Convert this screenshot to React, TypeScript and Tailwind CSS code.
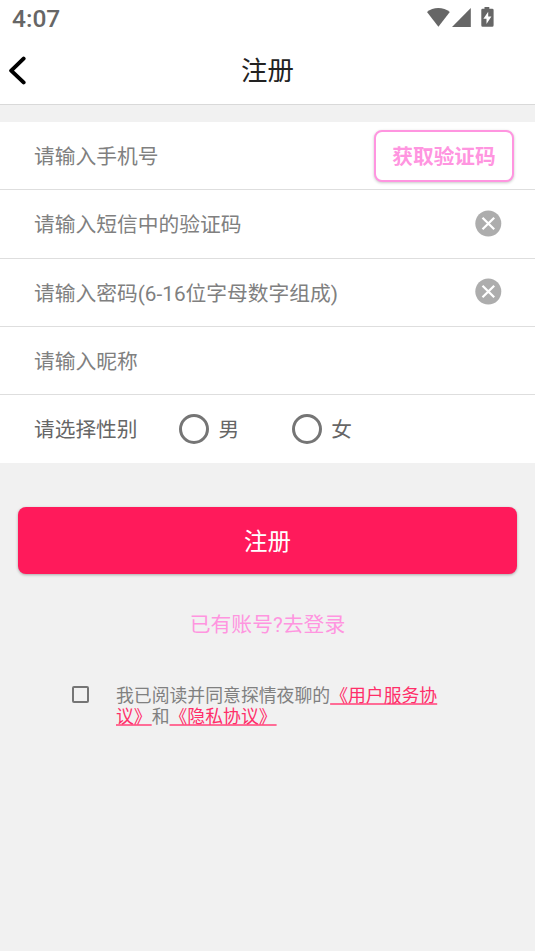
import type { ReactNode } from "react";

function StatusBar() {
  return (
    <div className="flex h-[37px] items-start justify-between bg-white pl-3 pr-10 text-[#666666]">
      <span className="mt-[4px] text-[24.5px] leading-[29px] font-medium">4:07</span>
      <svg className="mt-[6px] h-[22px] w-[70px]" viewBox="0 0 70 22" fill="#666666">
        <path d="M2 6C8 .8 18.5 .8 24.8 6L13.4 20.7Z" />
        <path d="M45.8 2V21H27Z" />
        <path
          fillRule="evenodd"
          d="M59.5 1H64.3V2.7H67.2Q68.6 2.7 68.6 4V19.3Q68.6 20.8 67.2 20.8H57.6Q56.3 20.8 56.3 19.3V4Q56.3 2.7 57.6 2.7H59.5ZM63.2 5.8L58.4 12.8H61.5V17.9L66.4 10.6H63.2Z"
        />
      </svg>
    </div>
  );
}

function Row({ label, height, children }: { label: string; height: string; children?: ReactNode }) {
  return (
    <div className={`flex items-center border-b border-[#dedede] bg-white pl-[34px] text-[20.75px] text-[#808080] ${height}`}>
      <span className="whitespace-nowrap pt-1">{label}</span>
      {children}
    </div>
  );
}

function ClearIcon() {
  return (
    <svg className="mr-[33px] ml-auto mb-[2px] h-[27px] w-[27px]" viewBox="0 0 27 27" fill="none">
      <circle cx="13.3" cy="13.5" r="13" fill="#adadad" />
      <path d="M7.5 7.8L19.2 19.2M19.2 7.8L7.5 19.2" stroke="white" strokeWidth="2.3" />
    </svg>
  );
}

function Radio({ label, margin }: { label: string; margin: string }) {
  return (
    <label className={`flex items-center ${margin}`}>
      <span className="h-[30px] w-[30px] rounded-full border-3 border-[#757575]" />
      <span className="ml-[9px] pt-1">{label}</span>
    </label>
  );
}

const linkStyle = "text-[#ff2e69] underline decoration-[#ff6c96] decoration-[1.5px] underline-offset-[1px]";

export default function App() {
  return (
    <main className="flex h-[951px] w-[535px] flex-col overflow-hidden bg-[#f1f1f1] font-['Roboto','Noto_Sans_CJK_SC',sans-serif]">
      <StatusBar />
      <header className="grid h-[68px] shrink-0 grid-cols-[60px_1fr_60px] items-center border-b border-[#d9d9d9] bg-white">
        <svg className="ml-[7px] h-[30px] w-[22px]" viewBox="0 0 22 30" fill="none" stroke="black" strokeWidth="4" strokeLinecap="round" strokeLinejoin="round">
          <path d="M16.6 2.6L4.2 14.6L16.6 26.4" />
        </svg>
        <h1 className="pt-px text-center text-[26.4px] leading-[36px] text-[#222222]">注册</h1>
      </header>

      <section className="mt-[17px] shrink-0">
        <Row label="请输入手机号" height="h-[68px]">
          <button className="mr-[21px] ml-auto h-[52px] w-[140px] rounded-[8px] border-2 border-[#ff95e0] bg-white pt-1 text-[20.7px] font-bold text-[#ff95e0] shadow-[0_1px_3px_rgba(0,0,0,0.22)]">
            获取验证码
          </button>
        </Row>
        <Row label="请输入短信中的验证码" height="h-[69px]">
          <ClearIcon />
        </Row>
        <Row label="请输入密码(6-16位字母数字组成)" height="h-[68px]">
          <ClearIcon />
        </Row>
        <Row label="请输入昵称" height="h-[68px]" />
        <div className="flex h-[68px] items-center bg-white pl-[34px] text-[20.7px] text-[#666666]">
          <span className="pt-1">请选择性别</span>
          <Radio label="男" margin="ml-[42px]" />
          <Radio label="女" margin="ml-[53px]" />
        </div>
      </section>

      <button className="mx-[18px] mt-[44px] h-[67px] shrink-0 rounded-[8px] bg-[#ff1a5b] pt-1 text-[23.5px] text-white shadow-[0_1px_3px_rgba(0,0,0,0.3)]">
        注册
      </button>
      <a className="mt-[36px] text-center text-[20.8px] leading-[30px] text-[#ff95e0]">已有账号?去登录</a>

      <div className="mt-[45px] ml-[72px] flex items-start">
        <span className="mt-[1px] h-[17px] w-[17px] rounded-[2px] border-2 border-[#757575]" />
        <p className="ml-[27px] w-[325px] text-[17.85px] leading-[21px] text-[#808080]">
          我已阅读并同意探情夜聊的<span className={linkStyle}>《用户服务协<br />议》</span>和<span className={linkStyle}>《隐私协议》</span>
        </p>
      </div>
    </main>
  );
}
